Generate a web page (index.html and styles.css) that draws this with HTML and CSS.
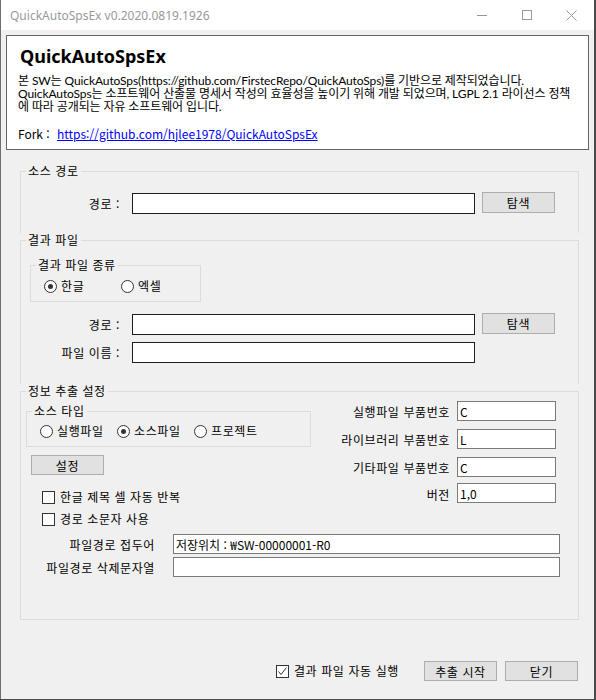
FILE: index.html
```html
<!DOCTYPE html>
<html lang="ko">
<head>
    <meta charset="UTF-8">
    <title>QuickAutoSpsEx</title>
    <link rel="stylesheet" href="styles.css">
</head>
<body>
    <div class="window">
        <!-- 타이틀바 -->
        <div class="titlebar">
            <span class="caption">QuickAutoSpsEx v0.2020.0819.1926</span>
            <div class="caption-btns">
                <span class="cap-btn"><svg width="10" height="10" viewBox="0 0 10 10"><path d="M0 5.5H10" stroke="#999" stroke-width="1"/></svg></span>
                <span class="cap-btn"><svg width="10" height="10" viewBox="0 0 10 10"><rect x="0.5" y="0.5" width="9" height="9" fill="none" stroke="#999" stroke-width="1"/></svg></span>
                <span class="cap-btn"><svg width="11" height="11" viewBox="0 0 11 11"><path d="M0.5 0.5L10.5 10.5M10.5 0.5L0.5 10.5" stroke="#999" stroke-width="1"/></svg></span>
            </div>
        </div>

        <!-- 소개 -->
        <div class="about">
            <div class="about-title">QuickAutoSpsEx</div>
            <div class="about-line">본 SW는 QuickAutoSps(https://github.com/FirstecRepo/QuickAutoSps)를 기반으로 제작되었습니다.</div>
            <div class="about-line">QuickAutoSps는 소프트웨어 산출물 명세서 작성의 효율성을 높이기 위해 개발 되었으며, LGPL 2.1 라이선스 정책</div>
            <div class="about-line">에 따라 공개되는 자유 소프트웨어 입니다.</div>
            <div class="about-fork"><span class="fork-label">Fork :</span><a href="#">https://github.com/hjlee1978/QuickAutoSpsEx</a></div>
        </div>

        <!-- 소스 경로 -->
        <fieldset class="group group-src open">
            <legend>소스 경로</legend>
            <div class="path-row">
                <span class="row-label">경로 :</span>
                <input class="textbox dark" type="text" value="">
                <button class="btn btn-browse">탐색</button>
            </div>
        </fieldset>

        <!-- 결과 파일 -->
        <fieldset class="group group-out open">
            <legend>결과 파일</legend>
            <fieldset class="subgroup kind-group">
                <legend>결과 파일 종류</legend>
                <div class="radio-row">
                    <label class="radio checked kind-hwp"><span class="dot"></span>한글</label>
                    <label class="radio kind-xls"><span class="dot"></span>엑셀</label>
                </div>
            </fieldset>
            <div class="path-row out-path">
                <span class="row-label">경로 :</span>
                <input class="textbox dark" type="text" value="">
                <button class="btn btn-browse">탐색</button>
            </div>
            <div class="path-row out-name">
                <span class="row-label">파일 이름 :</span>
                <input class="textbox dark" type="text" value="">
            </div>
        </fieldset>

        <!-- 정보 추출 설정 -->
        <fieldset class="group group-opt">
            <legend>정보 추출 설정</legend>
            <div class="opt-top">
                <div class="opt-left">
                    <fieldset class="subgroup type-group">
                        <legend>소스 타입</legend>
                        <div class="radio-row">
                            <label class="radio type-item"><span class="dot"></span>실행파일</label>
                            <label class="radio checked type-item"><span class="dot"></span>소스파일</label>
                            <label class="radio type-item"><span class="dot"></span>프로젝트</label>
                        </div>
                    </fieldset>
                    <button class="btn btn-setup">설정</button>
                    <label class="check first"><span class="box"></span>한글 제목 셀 자동 반복</label>
                    <label class="check"><span class="box"></span>경로 소문자 사용</label>
                </div>
                <div class="opt-right">
                    <span class="num-label">실행파일 부품번호</span><input class="textbox" type="text" value="C">
                    <span class="num-label">라이브러리 부품번호</span><input class="textbox" type="text" value="L">
                    <span class="num-label">기타파일 부품번호</span><input class="textbox" type="text" value="C">
                    <span class="num-label">버전</span><input class="textbox" type="text" value="1,0">
                </div>
            </div>
            <div class="prefix-row">
                <span class="prefix-label">파일경로 접두어</span>
                <input class="textbox" type="text" value="저장위치 : ₩SW-00000001-R0">
            </div>
            <div class="prefix-row second">
                <span class="prefix-label">파일경로 삭제문자열</span>
                <input class="textbox" type="text" value="">
            </div>
        </fieldset>

        <!-- 하단 버튼 -->
        <div class="footer">
            <label class="check checked"><span class="box"><svg width="11" height="11" viewBox="0 0 11 11"><path d="M1.5 5.5L4 8.5L9.5 1.5" fill="none" stroke="#333" stroke-width="1"/></svg></span>결과 파일 자동 실행</label>
            <button class="btn">추출 시작</button>
            <button class="btn">닫기</button>
        </div>
    </div>
</body>
</html>
```

FILE: styles.css
```css
* {
    box-sizing: border-box;
}

body {
    margin: 0;
    background: #4a4a4a;
    font-family: "Noto Sans CJK KR", "Noto Sans", sans-serif;
    font-size: 12px;
    letter-spacing: 0.6px;
    color: #000;
}

.window {
    width: 594px;
    height: 699px;
    background: #f0f0f0;
    border-left: 1px solid #6e6e6e;
    overflow: hidden;
}

/* 타이틀바 */
.titlebar {
    height: 30px;
    background: #fff;
    display: flex;
    align-items: center;
    padding-left: 9px;
    letter-spacing: 0;
}
.caption {
    font-family: "Noto Sans", "Noto Sans CJK KR", sans-serif;
    font-size: 12px;
    color: #999;
}
.caption-btns {
    margin-left: auto;
    display: flex;
}
.cap-btn {
    width: 45px;
    height: 30px;
    display: flex;
    align-items: center;
    justify-content: center;
}

/* 소개 */
.about {
    margin: 5px 5px 0;
    height: 115px;
    background: #fff;
    border: 1px solid #646464;
    padding: 9px 0 0 11px;
    letter-spacing: 0;
}
.about-title {
    font-family: "Noto Sans", "Noto Sans CJK KR", sans-serif;
    font-size: 18px;
    font-weight: bold;
    line-height: 22px;
    padding-left: 2px;
    margin-bottom: 7px;
}
.about-line {
    font-family: Lato, "Noto Sans CJK KR", sans-serif;
    font-size: 12px;
    letter-spacing: -0.1px;
    line-height: 13px;
    white-space: nowrap;
}
.about-fork {
    font-size: 12px;
    line-height: 13px;
    margin-top: 14px;
    white-space: nowrap;
}
.fork-label {
    display: inline-block;
    width: 39px;
}
.about-fork a {
    color: #0000ff;
}

/* 그룹 박스 */
.group {
    margin: 0 0 0 19px;
    width: 559px;
    padding: 0;
    border: 1px solid #dcdcdc;
    min-width: 0;
}
.group legend,
.subgroup legend {
    margin-left: 5px;
    padding: 0 2px;
    line-height: 14px;
}
.group.open {
    border-bottom: none;
}
.group-src {
    margin-top: 14px;
    padding-bottom: 19px;
}
.group-out {
    padding-bottom: 21px;
}
.group-opt {
    padding-bottom: 42px;
}

.subgroup {
    padding: 0;
    border: 1px solid #dcdcdc;
    min-width: 0;
}

/* 경로 줄 */
.path-row {
    display: flex;
    align-items: flex-start;
    margin-top: 15px;
}
.row-label {
    width: 99px;
    text-align: right;
    line-height: 21px;
    margin-right: 12px;
}
.textbox {
    height: 20px;
    border: 1px solid #7a7a7a;
    background: #fff;
    padding: 0 2px;
    font-family: inherit;
    font-size: 12px;
    letter-spacing: 0;
    color: #000;
    outline: none;
}
.path-row .textbox {
    width: 343px;
    height: 21px;
}
.textbox.dark {
    border-color: #1e1e1e;
}
.out-path {
    margin-top: 12px;
}
.out-name {
    margin-top: 7px;
}

/* 버튼 */
.btn {
    width: 73px;
    height: 20px;
    background: #e1e1e1;
    border: 1px solid #adadad;
    font-family: inherit;
    font-size: 12px;
    letter-spacing: 0.6px;
    color: #000;
    padding: 0;
}
.btn-browse {
    margin: -1px 0 0 7px;
    height: 21px;
}
.btn-setup {
    display: block;
    margin: 8px 0 0 10px;
}

/* 라디오 / 체크 */
.radio-row {
    display: flex;
    margin-top: 6px;
    padding-bottom: 8px;
    line-height: 14px;
}
.radio,
.check {
    display: flex;
    align-items: center;
    white-space: nowrap;
    line-height: 14px;
}
.radio .dot {
    width: 13px;
    height: 13px;
    border: 1px solid #333;
    border-radius: 50%;
    background: #fff;
    margin-right: 4px;
    display: flex;
    align-items: center;
    justify-content: center;
}
.radio.checked .dot::after {
    content: "";
    width: 5px;
    height: 5px;
    border-radius: 50%;
    background: #333;
}
.check .box {
    width: 13px;
    height: 13px;
    border: 1px solid #333;
    background: #fff;
    margin-right: 5px;
    display: flex;
    align-items: center;
    justify-content: center;
}

.kind-group {
    margin: 11px 0 0 9px;
    width: 171px;
}
.kind-group .radio-row {
    margin-top: 7px;
}
.kind-hwp {
    margin-left: 13px;
    width: 77px;
}

/* 정보 추출 설정 */
.opt-top {
    display: flex;
    justify-content: space-between;
    align-items: flex-start;
}
.type-group {
    margin: 6px 0 0 5px;
    width: 285px;
}
.type-group .radio-row {
    padding-left: 13px;
}
.type-item {
    width: 77px;
}
.check {
    margin: 8px 0 0 21px;
}
.check.first {
    margin-top: 15px;
}
.opt-right {
    display: grid;
    grid-template-columns: auto 99px;
    column-gap: 7px;
    row-gap: 8px;
    margin: 3px 22px 0 0;
    align-items: center;
}
.opt-right .num-label {
    text-align: right;
}
.opt-right .textbox:last-child {
    margin-top: -2px;
}

.prefix-row {
    display: flex;
    align-items: center;
    margin-top: 8px;
}
.prefix-row.second {
    margin-top: 3px;
}
.prefix-label {
    width: 134px;
    text-align: right;
    margin-right: 18px;
}
.prefix-row .textbox {
    width: 387px;
}

/* 하단 */
.footer {
    display: flex;
    align-items: center;
    justify-content: flex-end;
    margin-top: 41px;
    padding-right: 16px;
    gap: 8px;
}
.footer .check {
    margin: 0 17px 0 0;
}
```
